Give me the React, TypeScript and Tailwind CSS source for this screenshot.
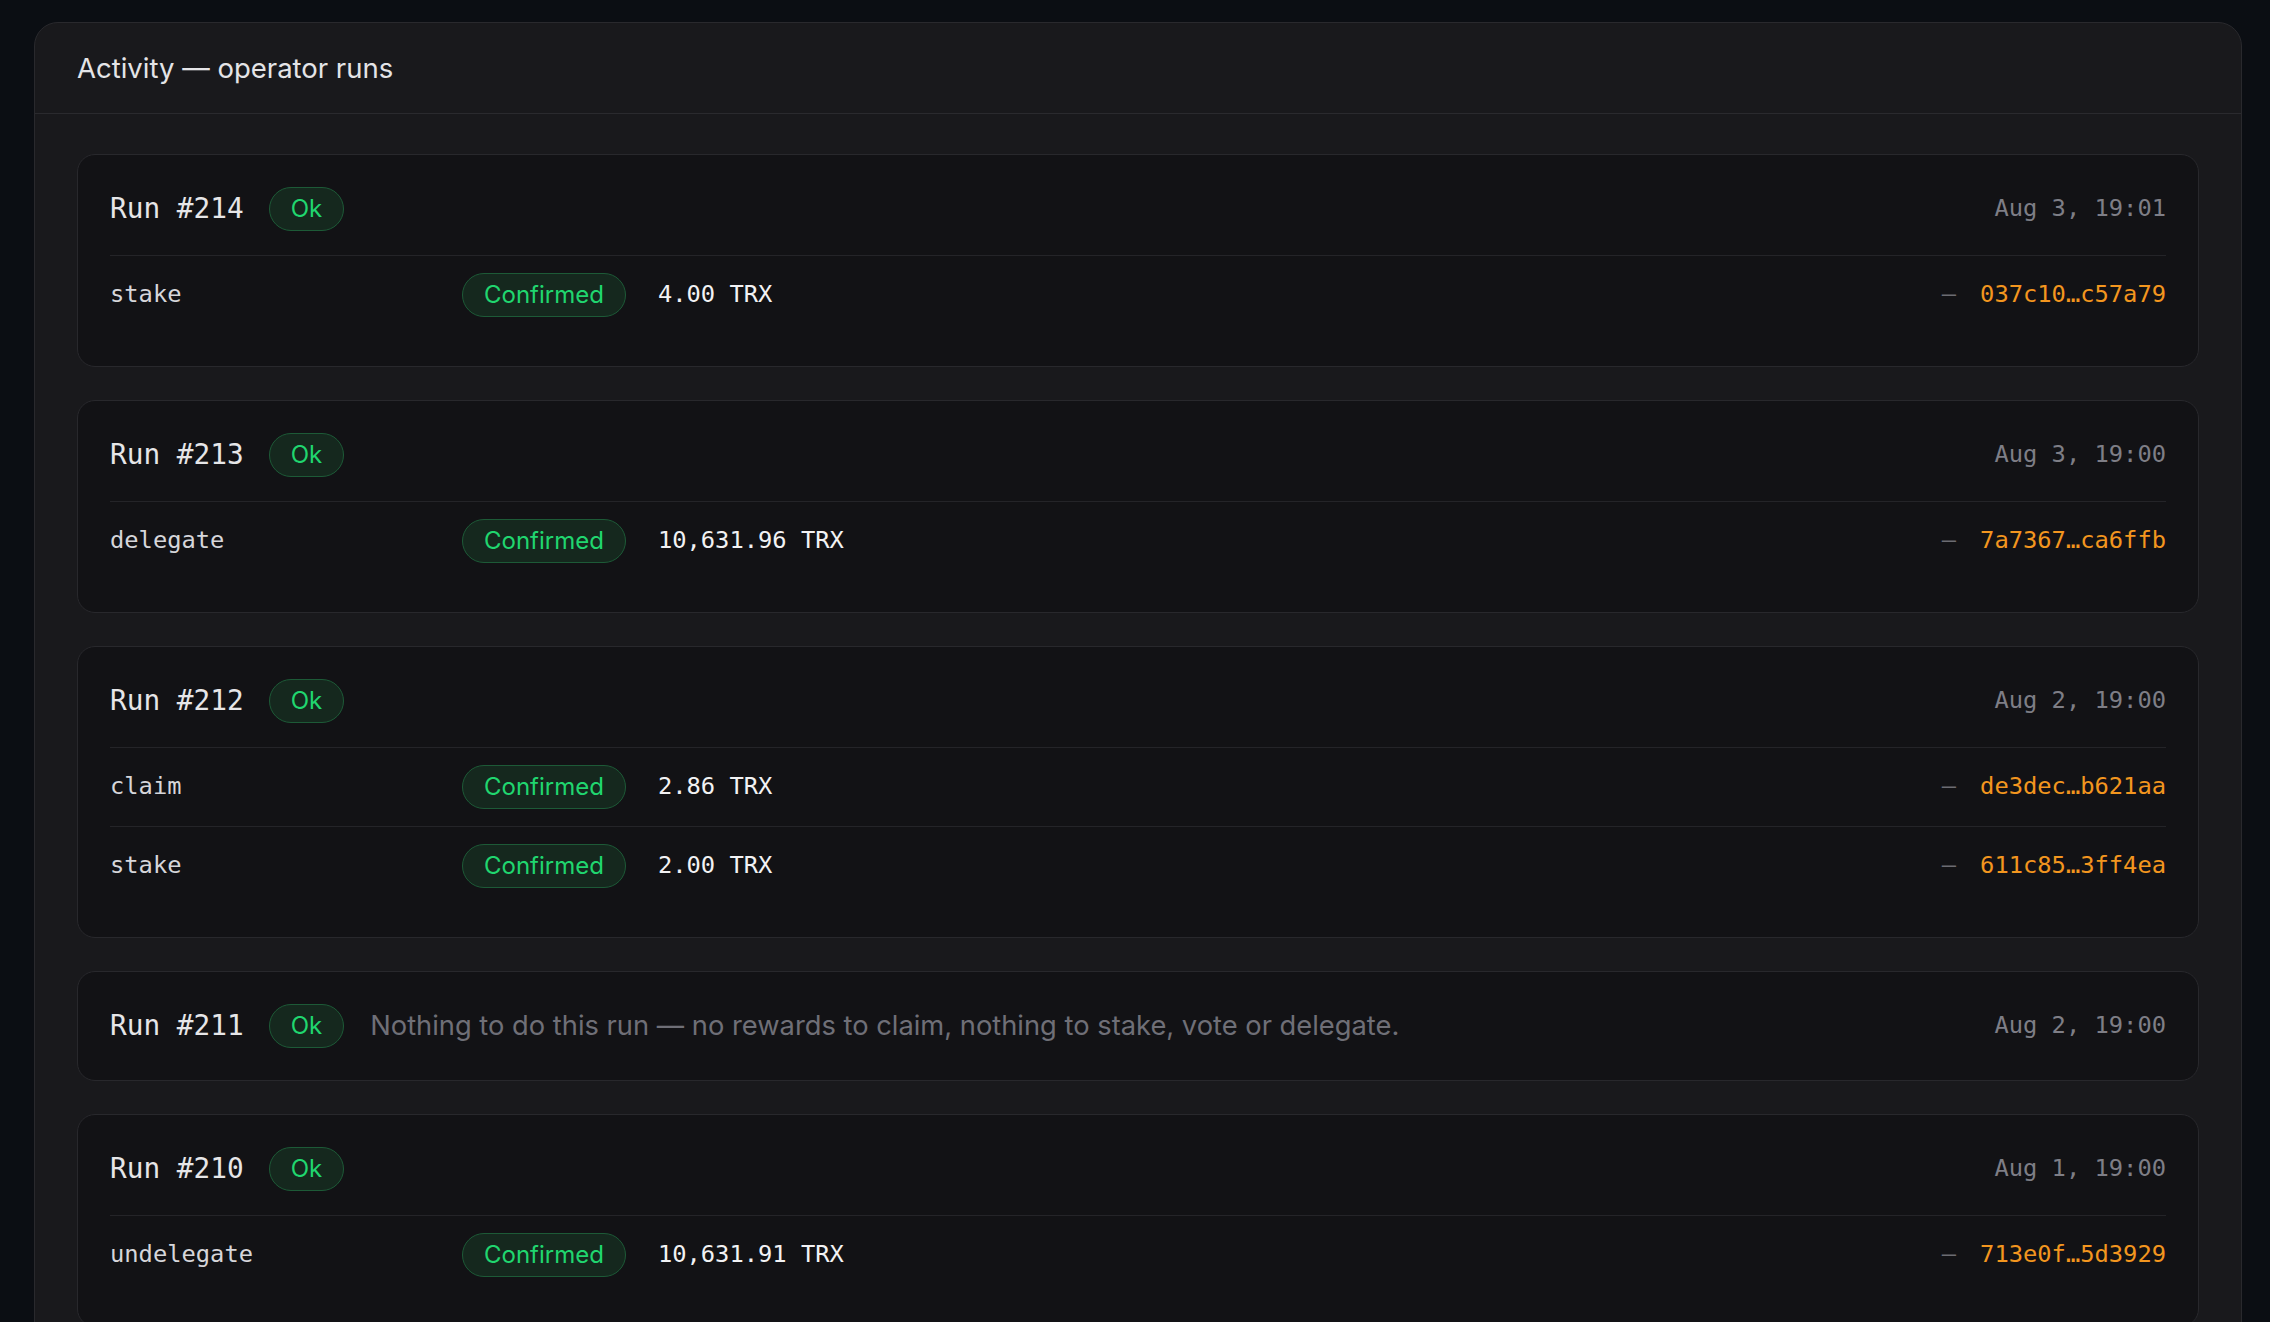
import React from "react";

type Tx = { action: string; amount: string; hash: string };
type Run = { id: number; date: string; txs: Tx[]; note?: string };

const runs: Run[] = [
  { id: 214, date: "Aug 3, 19:01", txs: [{ action: "stake", amount: "4.00 TRX", hash: "037c10…c57a79" }] },
  { id: 213, date: "Aug 3, 19:00", txs: [{ action: "delegate", amount: "10,631.96 TRX", hash: "7a7367…ca6ffb" }] },
  {
    id: 212,
    date: "Aug 2, 19:00",
    txs: [
      { action: "claim", amount: "2.86 TRX", hash: "de3dec…b621aa" },
      { action: "stake", amount: "2.00 TRX", hash: "611c85…3ff4ea" },
    ],
  },
  {
    id: 211,
    date: "Aug 2, 19:00",
    txs: [],
    note: "Nothing to do this run — no rewards to claim, nothing to stake, vote or delegate.",
  },
  { id: 210, date: "Aug 1, 19:00", txs: [{ action: "undelegate", amount: "10,631.91 TRX", hash: "713e0f…5d3929" }] },
];

const mono = "font-['DejaVu_Sans_Mono',monospace]";
const sans = "font-['Inter','Noto_Sans',sans-serif]";

function Pill({ children }: { children: React.ReactNode }) {
  return (
    <span
      className={`${sans} inline-flex h-[44px] shrink-0 items-center rounded-full border-[1.5px] border-[#1d5a37] bg-[#15281e] px-[21px] text-[24px] leading-none text-[#20d66f]`}
    >
      {children}
    </span>
  );
}

function RunCard({ run }: { run: Run }) {
  return (
    <div className="rounded-[18px] border border-[#28282c] bg-[#121215] px-[32px] pt-[32px] pb-[32px]">
      <div className="flex h-[44px] items-center">
        <span className={`${mono} text-[27.75px] leading-none text-[#e6e6e8]`}>Run #{run.id}</span>
        <span className="ml-[25px]">
          <Pill>Ok</Pill>
        </span>
        {run.note && (
          <span className={`${sans} ml-[26px] text-[27.3px] leading-none text-[#6f6f77]`}>{run.note}</span>
        )}
        <span className={`${mono} ml-auto text-[23.75px] leading-none text-[#7e7e86]`}>{run.date}</span>
      </div>
      {run.txs.length > 0 && (
        <div className="mt-[24px]">
          {run.txs.map((tx) => (
            <div
              key={tx.hash}
              className="flex items-center border-t border-[#242428] py-[17px]"
            >
              <span className={`${mono} w-[352px] shrink-0 text-[23.75px] leading-none text-[#d6d6da]`}>
                {tx.action}
              </span>
              <Pill>Confirmed</Pill>
              <span className={`${mono} ml-[32px] text-[23.75px] leading-none text-[#f2f2f4]`}>{tx.amount}</span>
              <span className="ml-auto flex items-center gap-[24px]">
                <span className={`${mono} text-[23.75px] leading-none text-[#6c6c72]`}>—</span>
                <span className={`${mono} text-[23.75px] leading-none text-[#f3961f]`}>{tx.hash}</span>
              </span>
            </div>
          ))}
        </div>
      )}
    </div>
  );
}

export default function App() {
  return (
    <div className="h-screen overflow-hidden bg-[#0b0e13] pt-[22px]">
      <section className="ml-[34px] mr-[28px] rounded-[24px] border border-[#29292d] bg-[#19191c]">
        <header className="flex h-[91px] items-center border-b border-[#2a2a2e] px-[42px] pt-[2px]">
          <h2 className={`${sans} text-[27.5px] font-normal leading-none text-[#e4e4e7]`}>
            Activity — operator runs
          </h2>
        </header>
        <div className="flex flex-col gap-[33px] px-[42px] pt-[40px] pb-[42px]">
          {runs.map((run) => (
            <RunCard key={run.id} run={run} />
          ))}
        </div>
      </section>
    </div>
  );
}
